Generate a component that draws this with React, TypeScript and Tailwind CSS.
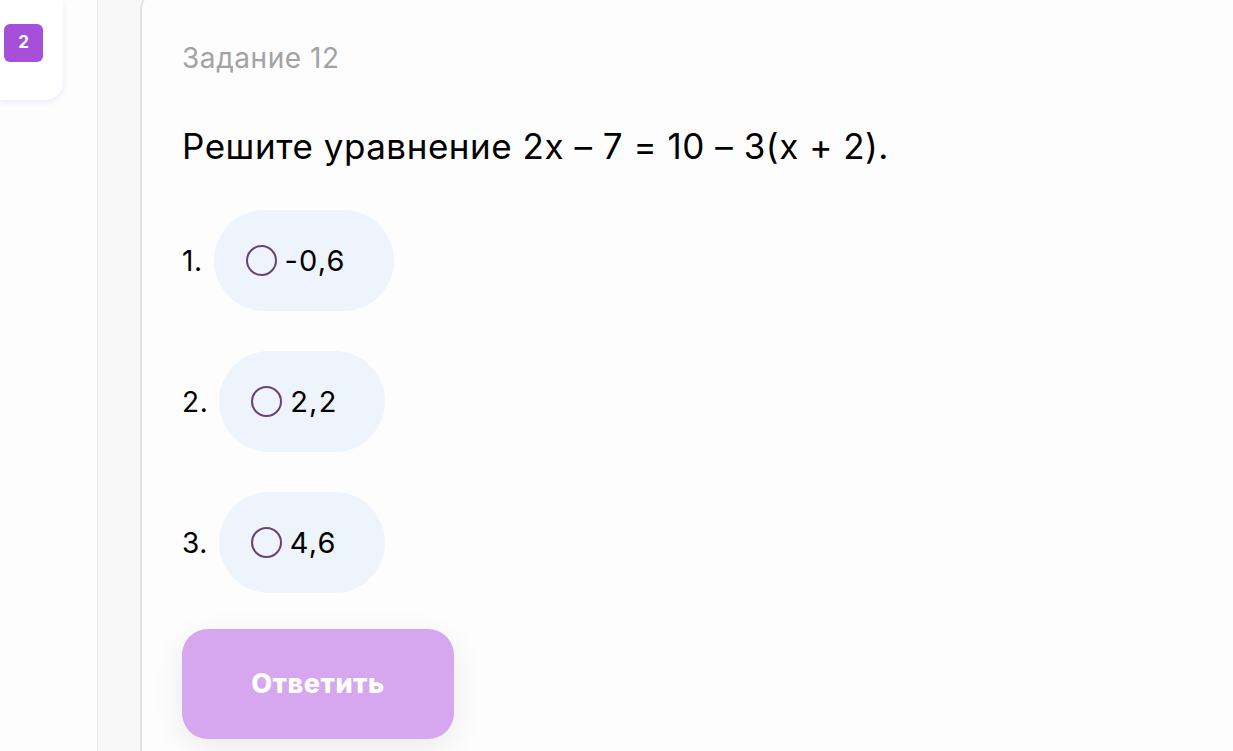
import { useState } from 'react'

const options = [
  { id: 1, label: '1.', value: '-0,6' },
  { id: 2, label: '2.', value: '2,2' },
  { id: 3, label: '3.', value: '4,6' },
]

export default function App() {
  const [selected, setSelected] = useState<number | null>(null)

  return (
    <div
      className="flex h-screen w-full overflow-hidden bg-[#fdfdfd] text-black"
      style={{ fontFamily: 'Inter, "Noto Sans", sans-serif' }}
    >
      {/* sidebar */}
      <aside className="w-[97px] shrink-0">
        <div className="h-[100px] w-[63px] rounded-br-[18px] bg-white pl-[4px] pt-[24px] shadow-[0_2px_6px_rgba(170,140,230,0.18)]">
          <div className="flex h-[38px] w-[39px] items-center justify-center rounded-[6px] bg-[#a54fdb] text-[17px] font-bold text-white">
            2
          </div>
        </div>
      </aside>

      <div className="w-[43px] shrink-0 border-l border-[#ededed] bg-[#f8f8f8]" />

      {/* task card */}
      <main className="-mt-[12px] flex-1 rounded-tl-[22px] border-l-2 border-t-2 border-[#e2e2e2] bg-[#fdfdfd] pl-[40px] pt-[48px]">
        <div className="text-[28px] leading-[40px] tracking-[0.02em] text-[#a3a3a3]">Задание 12</div>

        <h1 className="mt-[43px] text-[35px] leading-[50px] font-normal tracking-[0.015em]">
          Решите уравнение 2x – 7 = 10 – 3(x + 2).
        </h1>

        <div className="mt-[39px] flex flex-col gap-[40px]">
          {options.map((opt) => (
            <div key={opt.id} className="flex items-center gap-[11px]">
              <span className="text-[28px] tracking-[0.02em]">{opt.label}</span>
              <button
                onClick={() => setSelected(opt.id)}
                className="flex h-[101px] items-center gap-[8px] rounded-full bg-[#edf4fc] pl-[32px] pr-[48px]"
              >
                <span
                  className={`h-[31px] w-[31px] rounded-full border-2 border-[#6b3f7a] ${
                    selected === opt.id ? 'bg-[#a54fdb]' : ''
                  }`}
                />
                <span className="text-[29px] tracking-[0.04em]">{opt.value}</span>
              </button>
            </div>
          ))}
        </div>

        <button className="mt-[36px] h-[110px] w-[272px] rounded-[26px] bg-[#d6a6ef] text-[27px] font-extrabold tracking-[0.02em] text-white shadow-[0_8px_30px_rgba(0,0,0,0.08)]">
          Ответить
        </button>
      </main>
    </div>
  )
}
